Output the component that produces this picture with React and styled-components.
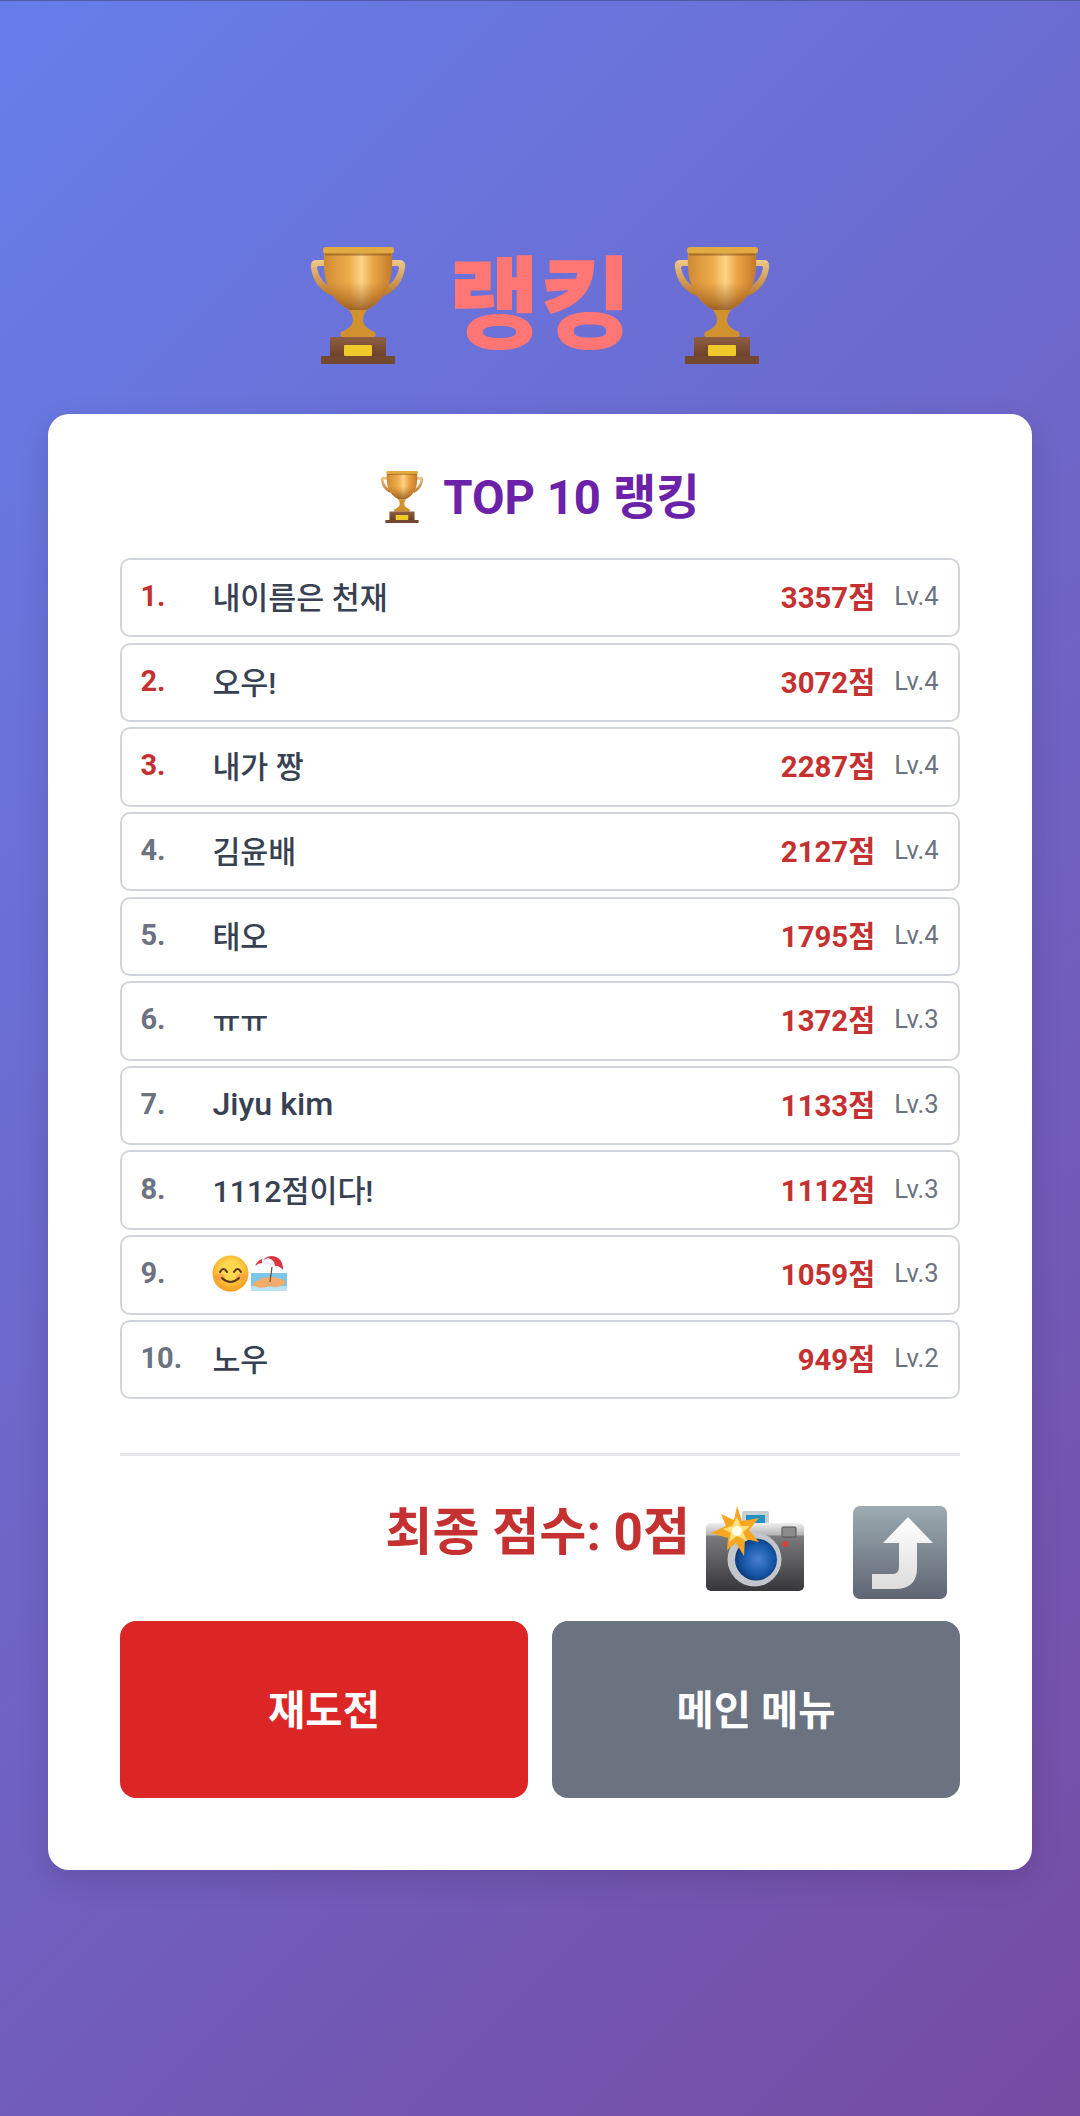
import React from "react";
import styled, { createGlobalStyle } from "styled-components";

const GlobalStyle = createGlobalStyle`
	html, body {
		margin: 0;
		padding: 0;
	}
	body {
		font-family: Roboto, "Noto Sans CJK KR", sans-serif;
	}
`;

const rankings = [
	{ name: "내이름은 천재", score: 3357, level: 4 },
	{ name: "오우!", score: 3072, level: 4 },
	{ name: "내가 짱", score: 2287, level: 4 },
	{ name: "김윤배", score: 2127, level: 4 },
	{ name: "태오", score: 1795, level: 4 },
	{ name: "ㅠㅠ", score: 1372, level: 3 },
	{ name: "Jiyu kim", score: 1133, level: 3, latin: true },
	{ name: "1112점이다!", score: 1112, level: 3 },
	{ name: "", score: 1059, level: 3, emoji: true },
	{ name: "노우", score: 949, level: 2 }
];

function Trophy({ width }) {
	return (
		<svg width={width} viewBox="0 0 98 117" role="img" aria-label="트로피" style={{ display: "block", flexShrink: 0 }}>
			<defs>
				<linearGradient id="cupFill" x1="0" x2="1" y1="0" y2="0">
					<stop offset="0" stopColor="#cf8a35" />
					<stop offset="0.38" stopColor="#f0ae4c" />
					<stop offset="0.55" stopColor="#fbd488" />
					<stop offset="0.72" stopColor="#eca544" />
					<stop offset="1" stopColor="#c27a2b" />
				</linearGradient>
				<linearGradient id="cupShade" x1="0" x2="0" y1="0" y2="1">
					<stop offset="0.5" stopColor="#a85f1c" stopOpacity="0" />
					<stop offset="1" stopColor="#80450f" stopOpacity="0.75" />
				</linearGradient>
				<linearGradient id="baseFill" x1="0" x2="0" y1="0" y2="1">
					<stop offset="0" stopColor="#8f5f42" />
					<stop offset="1" stopColor="#6b4029" />
				</linearGradient>
				<linearGradient id="handleFill" x1="0" x2="0" y1="0" y2="1">
					<stop offset="0" stopColor="#efc98c" />
					<stop offset="1" stopColor="#b9772c" />
				</linearGradient>
			</defs>
			<path d="M18 13 H7 Q1 13 2 21 Q5 41 23 49 L24 42 Q10 34 8 21 Q8 19 10 19 H18 Z" fill="url(#handleFill)" />
			<path d="M80 13 H91 Q97 13 96 21 Q93 41 75 49 L74 42 Q88 34 90 21 Q90 19 88 19 H80 Z" fill="url(#handleFill)" />
			<path d="M15 6 H83 Q84 26 80 37 Q73 56 57 63 H41 Q25 56 18 37 Q14 26 15 6 Z" fill="url(#cupFill)" />
			<path d="M15 6 H83 Q84 26 80 37 Q73 56 57 63 H41 Q25 56 18 37 Q14 26 15 6 Z" fill="url(#cupShade)" />
			<rect x="14" y="0" width="71" height="6.5" rx="3" fill="#e2ab42" />
			<rect x="16" y="6.5" width="66" height="2" fill="#8f5a1c" opacity="0.65" />
			<path d="M40 63 H58 Q54 68 54 74 Q55 81 66 85 Q69 91 60 91 H38 Q29 91 32 85 Q43 81 44 74 Q44 68 40 63 Z" fill="#d2912f" />
			<rect x="21" y="90" width="56" height="20" rx="1" fill="url(#baseFill)" />
			<rect x="12" y="109" width="74" height="8" rx="1" fill="#744731" />
			<rect x="35" y="98" width="28" height="11" rx="1" fill="#f0c92a" />
		</svg>
	);
}

function FlashCamera() {
	return (
		<svg width="98" height="85" viewBox="0 0 98 85" role="img" aria-label="카메라" style={{ display: "block", flexShrink: 0 }}>
			<defs>
				<linearGradient id="camBody" x1="0" x2="0" y1="0" y2="1">
					<stop offset="0" stopColor="#f0f0f0" />
					<stop offset="0.17" stopColor="#b5b5b5" />
					<stop offset="0.2" stopColor="#7a7a7c" />
					<stop offset="1" stopColor="#37373a" />
				</linearGradient>
				<radialGradient id="camLens" cx="0.55" cy="0.5" r="0.6">
					<stop offset="0" stopColor="#4a7fd0" />
					<stop offset="0.6" stopColor="#1558a8" />
					<stop offset="1" stopColor="#0c2f66" />
				</radialGradient>
			</defs>
			<rect x="36" y="5" width="27" height="14" rx="2" fill="#c9ced3" />
			<rect x="40" y="9" width="19" height="9" fill="#1f93c4" />
			<rect x="0" y="17" width="98" height="68" rx="5" fill="url(#camBody)" />
			<rect x="76" y="21" width="14" height="10" rx="1" fill="#8c8c8c" stroke="#555" />
			<circle cx="79.5" cy="38" r="3" fill="#d9403a" />
			<circle cx="48.5" cy="53.5" r="27" fill="#c3c6cc" />
			<circle cx="50" cy="53.5" r="21" fill="url(#camLens)" />
			<path d="M31 0 L36 15 L53 12 L43 24 L53 36 L39 33 L38 50 L30 37 L21 44 L22 32 L5 27 L20 20 L15 8 L28 14 Z" fill="#f6a623" />
			<path d="M31 11 L35 20 L44 20 L37 26 L41 35 L31 30 L23 36 L25 27 L17 23 L26 20 Z" fill="#ffe27a" />
			<circle cx="31" cy="25" r="5" fill="#fffde8" />
		</svg>
	);
}

function ReturnArrow() {
	return (
		<svg width="94" height="93" viewBox="0 0 94 93" role="img" aria-label="위로" style={{ display: "block", flexShrink: 0 }}>
			<defs>
				<linearGradient id="arrowBg" x1="0" x2="0" y1="0" y2="1">
					<stop offset="0" stopColor="#9dabb1" />
					<stop offset="1" stopColor="#5f6573" />
				</linearGradient>
				<linearGradient id="arrowFg" x1="0" x2="0" y1="0" y2="1">
					<stop offset="0" stopColor="#ffffff" />
					<stop offset="1" stopColor="#dcdcdc" />
				</linearGradient>
			</defs>
			<rect width="94" height="93" rx="7" fill="url(#arrowBg)" />
			<path d="M55 11 L80 37 H64 V62 Q64 83 42 83 H19 V68 H40 Q46 68 46 60 V37 H30 Z" fill="url(#arrowFg)" />
		</svg>
	);
}

function SmileFace() {
	return (
		<svg width="37" height="37" viewBox="0 0 37 37" role="img" aria-label="웃는 얼굴" style={{ display: "block" }}>
			<defs>
				<radialGradient id="smileFill" cx="0.5" cy="0.4" r="0.6">
					<stop offset="0.4" stopColor="#ffd84f" />
					<stop offset="1" stopColor="#f59a1c" />
				</radialGradient>
			</defs>
			<circle cx="18.5" cy="18.5" r="18" fill="url(#smileFill)" />
			<ellipse cx="8" cy="22" rx="5" ry="3.5" fill="#f98a4a" opacity="0.5" />
			<ellipse cx="29" cy="22" rx="5" ry="3.5" fill="#f98a4a" opacity="0.5" />
			<path d="M8 17 Q11.5 11 15 17 M22 17 Q25.5 11 29 17" fill="none" stroke="#5b3a1a" strokeWidth="2" strokeLinecap="round" />
			<path d="M10 23 Q18.5 31 27 23" fill="none" stroke="#5b3a1a" strokeWidth="2" strokeLinecap="round" />
		</svg>
	);
}

function BeachUmbrella() {
	return (
		<svg width="38" height="36" viewBox="0 0 38 36" role="img" aria-label="해변" style={{ display: "block" }}>
			<rect x="1" y="18" width="36" height="18" fill="#7cc6e8" />
			<rect x="1" y="31" width="36" height="5" fill="#b9e3f3" />
			<path d="M2 30 Q10 21 22 22 Q34 23 36 28 Q28 34 20 31 Q10 35 2 30 Z" fill="#f3ab6b" />
			<path d="M22 12 L20 27" stroke="#6b4a2b" strokeWidth="1.2" />
			<path d="M5 11 Q11 0 22 1 Q33 2 33 15 Q28 10 22 12 Q13 7 5 11 Z" fill="#f3eef8" />
			<path d="M13 5 Q17 1 22 1 Q33 2 33 15 Q28 10 25 11 Q25 5 18 3 Z" fill="#d8333f" />
			<path d="M5 11 Q7 6 12 4 Q12 7 12 8 Q8 8 5 11 Z" fill="#d8333f" />
		</svg>
	);
}

export default function App() {
	return (
		<Page>
			<GlobalStyle />
			<Title>
				<Trophy width={98} />
				<TitleText>랭킹</TitleText>
				<Trophy width={98} />
			</Title>
			<Card>
				<CardTitle>
					<Trophy width={44} />
					<CardTitleText>TOP 10 랭킹</CardTitleText>
				</CardTitle>
				<List>
					{rankings.map((r, i) => (
						<Row key={r.score}>
							<Rank $top={i < 3}>{i + 1}.</Rank>
							<Name $latin={r.latin}>
								{r.emoji ? <><SmileFace /><BeachUmbrella /></> : r.name}
							</Name>
							<Score>{r.score}점</Score>
							<Level>Lv.{r.level}</Level>
						</Row>
					))}
				</List>
				<Divider />
				<FinalRow>
					<FinalScore>최종 점수: 0점</FinalScore>
					<IconGroup>
						<FlashCamera />
						<ReturnArrow />
					</IconGroup>
				</FinalRow>
				<Buttons>
					<Button $bg="#dc2626">재도전</Button>
					<Button $bg="#6b7280">메인 메뉴</Button>
				</Buttons>
			</Card>
		</Page>
	);
}

const Page = styled.div`
	width: 1080px;
	height: 2116px;
	box-sizing: border-box;
	padding-top: 246px;
	background: linear-gradient(135deg, #667eea 0%, #764ba2 100%);
	border-top: 1px solid #4f5aa8;
	display: flex;
	flex-direction: column;
	align-items: center;
`;

const Title = styled.h1`
	margin: 0 0 50px;
	height: 117px;
	display: flex;
	align-items: center;
	gap: 41px;
`;

const TitleText = styled.span`
	font-size: 100px;
	line-height: 117px;
	font-weight: 900;
	color: #ff7675;
`;

const Card = styled.div`
	width: 984px;
	box-sizing: border-box;
	padding: 52px 72px 72px;
	background: #fff;
	border-radius: 21px;
	box-shadow: 0 10px 30px rgba(0,0,0,0.12);
`;

const CardTitle = styled.h2`
	margin: 0 0 30px;
	height: 62px;
	display: flex;
	justify-content: center;
	align-items: center;
	gap: 19px;
	font-size: 47.25px;
	font-weight: 700;
	color: #6b21a8;
`;

const CardTitleText = styled.span`
	padding-bottom: 7px;
`;

const List = styled.div`
	display: flex;
	flex-direction: column;
	gap: 5.25px;
`;

const Row = styled.div`
	height: 79.4px;
	box-sizing: border-box;
	padding: 0 19.4px 3px 18.4px;
	display: flex;
	align-items: center;
	background: #fff;
	border: 2.625px solid #d1d5db;
	border-radius: 10px;
`;

const Rank = styled.span`
	width: 72px;
	font-size: 29px;
	font-weight: 700;
	color: ${props => (props.$top ? "#c53030" : "#6b7280")};
`;

const Name = styled.span`
	flex: 1;
	display: flex;
	align-items: center;
	gap: 1px;
	font-size: ${props => (props.$latin ? "32.2px" : "30.4px")};
	font-weight: 500;
	color: #374151;
`;

const Score = styled.span`
	padding-bottom: 2px;
	font-size: 29.4px;
	font-weight: 700;
	color: #c53030;
`;

const Level = styled.span`
	margin-left: 19px;
	font-size: 25.6px;
	color: #6b7280;
`;

const Divider = styled.div`
	height: 3px;
	margin-top: 54px;
	background: #e5e7eb;
`;

const FinalRow = styled.div`
	margin-top: 49px;
	padding-right: 13px;
	display: flex;
	justify-content: flex-end;
	align-items: flex-start;
	gap: 16px;
`;

const FinalScore = styled.span`
	padding-top: 2px;
	font-size: 51.2px;
	line-height: 52px;
	font-weight: 700;
	color: #c53030;
`;

const IconGroup = styled.div`
	display: flex;
	align-items: flex-start;
	gap: 49px;
	padding-top: 1px;
`;

const Buttons = styled.div`
	margin-top: 22px;
	display: flex;
	gap: 24px;
`;

const Button = styled.button`
	flex: 1;
	height: 177px;
	padding: 0 0 4px;
	border: none;
	border-radius: 16px;
	background: ${props => props.$bg};
	color: #fff;
	font-family: inherit;
	font-size: 40.5px;
	font-weight: 700;
`;
